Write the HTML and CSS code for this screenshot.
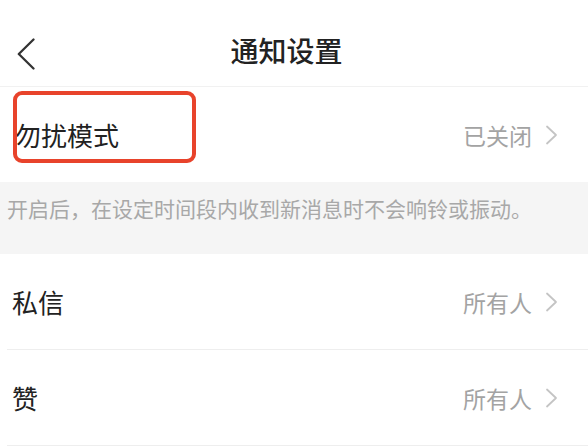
FILE: index.html
```html
<!DOCTYPE html>
<html lang="zh-CN">
<head>
<meta charset="utf-8">
<title>通知设置</title>
<link rel="stylesheet" href="styles.css">
</head>
<body>
<div class="page">
  <header class="nav">
    <div class="nav-left">
      <svg class="back" width="18" height="32" viewBox="0 0 18 32"><path d="M16.5 1.5 L1.8 16 L16.5 30.5" fill="none" stroke="#333" stroke-width="2.3" stroke-linecap="round" stroke-linejoin="round"/></svg>
    </div>
    <h1 class="nav-title">通知设置</h1>
    <div class="nav-right"></div>
  </header>

  <div class="row row-first">
    <span class="label label-first">勿扰模式</span>
    <span class="value">已关闭</span>
    <svg class="arrow" width="13" height="20" viewBox="0 0 13 20"><path d="M2 1.5 L11 10 L2 18.5" fill="none" stroke="#c4c4c4" stroke-width="1.8" stroke-linecap="round" stroke-linejoin="round"/></svg>
    <div class="mark"></div>
  </div>

  <div class="hint">开启后，在设定时间段内收到新消息时不会响铃或振动。</div>

  <div class="row row-line">
    <span class="label">私信</span>
    <span class="value">所有人</span>
    <svg class="arrow" width="13" height="20" viewBox="0 0 13 20"><path d="M2 1.5 L11 10 L2 18.5" fill="none" stroke="#c4c4c4" stroke-width="1.8" stroke-linecap="round" stroke-linejoin="round"/></svg>
  </div>

  <div class="row row-line">
    <span class="label">赞</span>
    <span class="value">所有人</span>
    <svg class="arrow" width="13" height="20" viewBox="0 0 13 20"><path d="M2 1.5 L11 10 L2 18.5" fill="none" stroke="#c4c4c4" stroke-width="1.8" stroke-linecap="round" stroke-linejoin="round"/></svg>
  </div>
</div>
</body>
</html>
```

FILE: styles.css
```css
* { box-sizing: border-box; }

html, body {
  margin: 0;
  padding: 0;
  background: #ffffff;
}

body {
  font-family: "Noto Sans CJK SC", "Noto Sans", sans-serif;
  color: #222222;
}

.page {
  width: 588px;
  height: 448px;
  overflow: hidden;
}

.nav {
  height: 87px;
  padding-top: 14px;
  padding-right: 15px;
  border-bottom: 1px solid #f1f1f1;
  display: grid;
  grid-template-columns: 1fr auto 1fr;
  align-items: center;
}

.nav-left {
  display: flex;
  align-items: center;
  padding-left: 17px;
}

.back {
  display: block;
  margin-top: 7px;
}

.nav-title {
  margin: 0;
  font-size: 28px;
  line-height: 32px;
  font-weight: 500;
  color: #222222;
}

.row {
  position: relative;
  display: flex;
  align-items: center;
  padding: 0 30px 0 12px;
}

.row-first {
  height: 95px;
}

.row-line {
  height: 96px;
  margin-left: 7px;
  padding-left: 5px;
  border-bottom: 1px solid #eeeeee;
}

.label {
  flex: 1;
  font-size: 26px;
  line-height: 32px;
  color: #222222;
}

.label-first {
  padding-left: 3px;
}

.value {
  font-size: 23px;
  line-height: 30px;
  color: #a3a3a3;
  margin-right: 13px;
}

.arrow {
  display: block;
}

.mark {
  position: absolute;
  left: 13px;
  top: 4px;
  width: 183px;
  height: 72px;
  border: 4px solid #e8432b;
  border-radius: 9px;
}

.hint {
  height: 72px;
  background: #f5f5f5;
  padding: 12px 0 0 7px;
  font-size: 21px;
  line-height: 28px;
  color: #a8a8a8;
}
```
